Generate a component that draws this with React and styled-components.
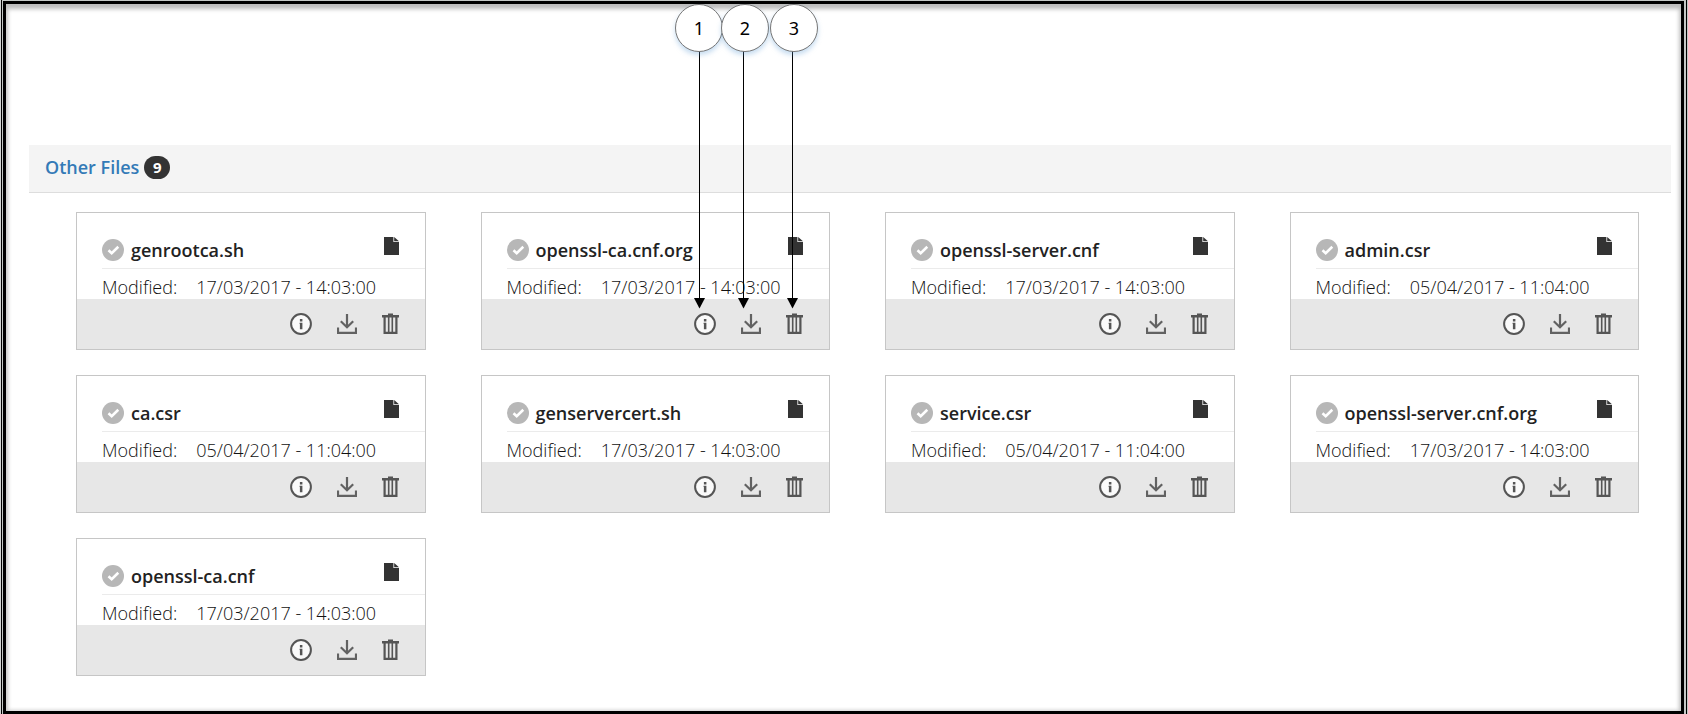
import React from "react";
import styled, { createGlobalStyle } from "styled-components";

const colors = {
  text: "#333333",
  title: "#222222",
  muted: "#555555",
  link: "#337ab7",
  bar: "#f4f4f4",
  footer: "#e7e7e7",
  border: "#c6c6c6",
};

const files = [
  { name: "genrootca.sh", modified: "17/03/2017 - 14:03:00" },
  { name: "openssl-ca.cnf.org", modified: "17/03/2017 - 14:03:00" },
  { name: "openssl-server.cnf", modified: "17/03/2017 - 14:03:00" },
  { name: "admin.csr", modified: "05/04/2017 - 11:04:00" },
  { name: "ca.csr", modified: "05/04/2017 - 11:04:00" },
  { name: "genservercert.sh", modified: "17/03/2017 - 14:03:00" },
  { name: "service.csr", modified: "05/04/2017 - 11:04:00" },
  { name: "openssl-server.cnf.org", modified: "17/03/2017 - 14:03:00" },
  { name: "openssl-ca.cnf", modified: "17/03/2017 - 14:03:00" },
];

const callouts = [
  { label: "1", left: 675, arrow: 699 },
  { label: "2", left: 721, arrow: 743 },
  { label: "3", left: 770, arrow: 792 },
];

const CheckIcon = () => (
  <svg width="22" height="22" viewBox="0 0 22 22" aria-hidden="true">
    <circle cx="11" cy="11" r="11" fill="#b7b7b7" />
    <path d="M6.5 11.2l3.2 3 6.6-6.4" fill="none" stroke="#fff" strokeWidth="2.6" />
  </svg>
);

const FileIcon = () => (
  <svg width="15" height="18" viewBox="0 0 15 18" aria-hidden="true">
    <path d="M0 0h9.4v5h5.6v13H0z" fill={colors.text} />
    <path d="M10.2 0L15 4.3h-4.8z" fill={colors.text} />
  </svg>
);

const InfoIcon = () => (
  <svg width="22" height="22" viewBox="0 0 22 22" aria-hidden="true">
    <circle cx="11" cy="11" r="9.9" fill="#fafafa" stroke={colors.muted} strokeWidth="2" />
    <path
      d="M9.9 6h2.5v2.4H9.9zM9.6 9.8h2.8v6.4H9.9V11h-.3z"
      fill={colors.muted}
    />
  </svg>
);

const DownloadIcon = () => (
  <svg width="20" height="20" viewBox="0 0 20 20" aria-hidden="true">
    <path
      d="M10 0v12.5M3.8 7.2l6.2 6 6.2-6M1 13.5v5.3h18v-5.3"
      fill="none"
      stroke="#626262"
      strokeWidth="2.2"
    />
  </svg>
);

const TrashIcon = () => (
  <svg width="17" height="22" viewBox="0 0 17 22" aria-hidden="true">
    <path d="M6 .5h5V2h6v2.6H0V2h6z" fill={colors.muted} />
    <path d="M2.6 4v15.8h11.8V4" fill="none" stroke={colors.muted} strokeWidth="2.2" />
    <path d="M6.7 4v16M10.3 4v16" stroke={colors.muted} strokeWidth="1.6" />
  </svg>
);

const FileCard = ({ name, modified }) => (
  <Card>
    <CardBody>
      <TitleRow>
        <CheckIcon />
        <FileName>{name}</FileName>
        <FileIcon />
      </TitleRow>
      <Modified>
        <span>Modified:</span>
        <time>{modified}</time>
      </Modified>
    </CardBody>
    <CardFooter>
      <IconButton type="button" aria-label={`Details of ${name}`}>
        <InfoIcon />
      </IconButton>
      <IconButton type="button" aria-label={`Download ${name}`}>
        <DownloadIcon />
      </IconButton>
      <IconButton type="button" aria-label={`Delete ${name}`}>
        <TrashIcon />
      </IconButton>
    </CardFooter>
  </Card>
);

const App = () => (
  <>
    <GlobalStyle />
    <Frame>
      <Page>
        <SectionHeader>
          <SectionLink href="#other-files">Other Files</SectionLink>
          <Badge>{files.length}</Badge>
        </SectionHeader>
        <Grid id="other-files">
          {files.map((file) => (
            <FileCard key={file.name} {...file} />
          ))}
        </Grid>
      </Page>
      <Arrows width="840" height="310" aria-hidden="true">
        {callouts.map(({ label, arrow }) => (
          <g key={label}>
            <rect x={arrow} y="51" width="1" height="250" />
            <path d={`M${arrow - 5} 298h11l-5.5 10.5z`} />
          </g>
        ))}
      </Arrows>
      {callouts.map(({ label, left }) => (
        <Callout key={label} $left={left}>
          {label}
        </Callout>
      ))}
    </Frame>
  </>
);

const GlobalStyle = createGlobalStyle`
  * {
    box-sizing: border-box;
  }

  body {
    margin: 0;
    background: #fff;
    color: ${colors.text};
    font-family: "Open Sans", "Noto Sans", sans-serif;
  }
`;

const Frame = styled.div`
  position: relative;
  display: flex;
  min-height: 100vh;
  padding: 1px 4px 0 3px;
  background: #c4c8c6;
  box-shadow: inset 1px 0 #d4d6d5, inset 2px 0 #000, inset -1px 0 #c4c8c6,
    inset -2px 0 #000;
`;

const Page = styled.main`
  flex: 1;
  padding: 141px 10px 32px 23px;
  background: #fff;
  border: 3px solid #000;
  box-shadow: inset 0 5px 4px #bdbdbd, inset 2px 0 4px #d4d4d4,
    inset -2px 0 4px #d4d4d4;
`;

const SectionHeader = styled.header`
  display: flex;
  align-items: center;
  gap: 5px;
  height: 48px;
  padding: 0 16px 3px;
  background: ${colors.bar};
  border-bottom: 1px solid #dddddd;
`;

const SectionLink = styled.a`
  color: ${colors.link};
  font-size: 18px;
  font-weight: 600;
  line-height: 24px;
  text-decoration: none;
`;

const Badge = styled.span`
  min-width: 26px;
  border-radius: 12px;
  background: ${colors.text};
  color: #fff;
  font-size: 15px;
  font-weight: 700;
  line-height: 23px;
  text-align: center;
`;

const Grid = styled.section`
  display: grid;
  grid-template-columns: repeat(4, 1fr);
  gap: 25px 55px;
  padding: 19px 32px 0 47px;
`;

const Card = styled.article`
  border: 1px solid ${colors.border};
  background: #fff;
`;

const CardBody = styled.div`
  padding: 22px 0 0 25px;
`;

const TitleRow = styled.div`
  display: flex;
  align-items: center;
  gap: 7px;
  height: 34px;
  padding: 0 26px 4px 0;
  border-bottom: 1px solid #ebebeb;

  svg:last-child {
    margin-bottom: 8px;
  }
`;

const FileName = styled.strong`
  flex: 1;
  color: ${colors.title};
  font-size: 18px;
  font-weight: 600;
  line-height: 24px;
`;

const Modified = styled.div`
  display: flex;
  gap: 19px;
  padding-top: 6px;
  color: #111111;
  font-size: 18px;
  font-weight: 300;
  line-height: 24px;
`;

const CardFooter = styled.footer`
  display: flex;
  justify-content: flex-end;
  align-items: center;
  gap: 25px;
  height: 50px;
  padding: 0 26px 0 0;
  background: ${colors.footer};
`;

const IconButton = styled.button`
  display: flex;
  padding: 0;
  border: 0;
  background: none;
  cursor: pointer;
`;

const Arrows = styled.svg`
  position: absolute;
  top: 0;
  left: 0;
  pointer-events: none;
`;

const Callout = styled.span`
  position: absolute;
  top: 4px;
  left: ${({ $left }) => $left}px;
  width: 48px;
  height: 48px;
  border: 1px solid #777;
  border-radius: 50%;
  background: #fff;
  box-shadow: 0 3px 5px rgba(91, 155, 213, 0.35);
  color: #000;
  font-family: "Noto Sans", "Open Sans", sans-serif;
  font-size: 18px;
  line-height: 46px;
  text-align: center;
`;

export default App;
